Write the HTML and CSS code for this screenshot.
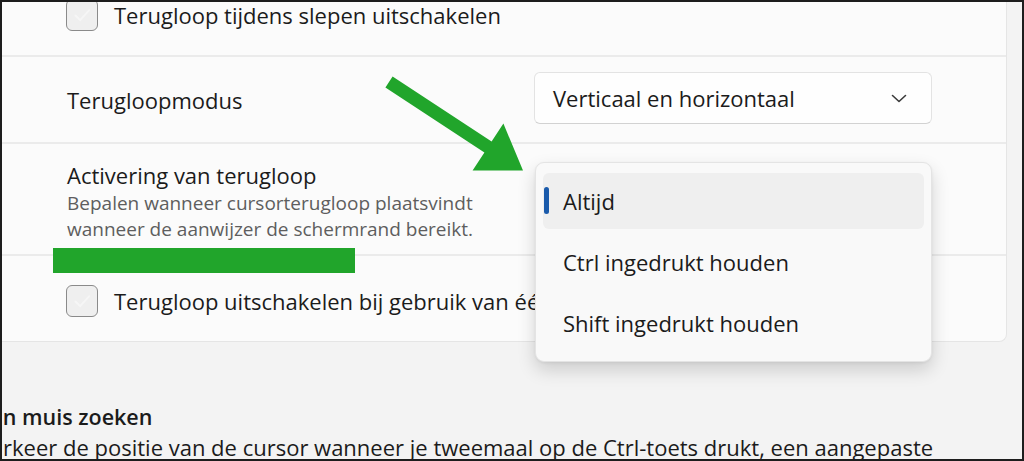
FILE: index.html
```html
<!DOCTYPE html>
<html lang="nl">
<head>
<meta charset="utf-8">
<title>Muisaanwijzer – terugloop</title>
<link rel="stylesheet" href="styles.css">
</head>
<body>
<div class="screen">
  <section class="card">
    <div class="row row-check">
      <span class="checkbox"><svg viewBox="0 0 32 32" width="32" height="32"><polyline points="9,16.5 14,21.5 23.5,11" fill="none" stroke="#f6f6f6" stroke-width="2" stroke-linecap="round" stroke-linejoin="round"/></svg></span>
      <span class="label">Terugloop tijdens slepen uitschakelen</span>
    </div>
    <div class="row row-select">
      <span class="label">Terugloopmodus</span>
      <div class="combo">
        <span class="combo-value">Verticaal en horizontaal</span>
        <svg class="chevron" viewBox="0 0 16 9" width="16" height="9"><polyline points="1.5,1.5 8,7.5 14.5,1.5" fill="none" stroke="#3a3a3a" stroke-width="1.6" stroke-linecap="round" stroke-linejoin="round"/></svg>
      </div>
    </div>
    <div class="row row-desc">
      <div class="text-block">
        <span class="label">Activering van terugloop</span>
        <p class="desc">Bepalen wanneer cursorterugloop plaatsvindt<br>wanneer de aanwijzer de schermrand bereikt.</p>
      </div>
    </div>
    <div class="row row-check">
      <span class="checkbox"><svg viewBox="0 0 32 32" width="32" height="32"><polyline points="9,16.5 14,21.5 23.5,11" fill="none" stroke="#f6f6f6" stroke-width="2" stroke-linecap="round" stroke-linejoin="round"/></svg></span>
      <span class="label">Terugloop uitschakelen bij gebruik van één scherm</span>
    </div>
  </section>

  <section class="next-section">
    <h2 class="section-title">Mijn muis zoeken</h2>
    <p class="section-desc">Markeer de positie van de cursor wanneer je tweemaal op de Ctrl-toets drukt, een aangepaste sneltoets gebruikt of de muis schudt</p>
  </section>

  <!-- open list of the activation combo box -->
  <ul class="flyout">
    <li class="option selected">Altijd</li>
    <li class="option">Ctrl ingedrukt houden</li>
    <li class="option">Shift ingedrukt houden</li>
  </ul>

  <!-- green markers -->
  <svg class="marker-arrow" viewBox="0 0 1024 461" width="1024" height="461">
    <polygon points="392.6,76.6 491.6,141.6 503.4,123.6 523,170.5 472.6,170.4 484.4,152.4 385.4,87.4" fill="#21a52b"/>
  </svg>
  <div class="marker-bar"></div>
</div>
</body>
</html>
```

FILE: styles.css
```css
html, body {
  margin: 0;
  padding: 0;
  background: #f3f3f3;
}

.screen {
  position: relative;
  width: 1024px;
  height: 461px;
  box-sizing: border-box;
  border: 2px solid #1d1d1d;
  overflow: hidden;
  background: #f3f3f3;
  font-family: "Open Sans", "Noto Sans", sans-serif;
  color: #1b1b1b;
}

/* settings card */
.card {
  margin: -32px 15px 0 -20px;
  background: #fbfbfb;
  border: 1px solid #e5e5e5;
  border-top: none;
  border-radius: 0 0 8px 8px;
}

.row {
  display: flex;
  align-items: center;
  padding: 0 74px 0 84px;
  border-top: 2px solid #ebebeb;
}

.row:first-child {
  border-top: none;
}

.row-check {
  height: 80px;
  padding-top: 5px;
  gap: 16px;
}

.row-select {
  height: 85px;
  justify-content: space-between;
}

.row-desc {
  height: 110px;
  align-items: flex-start;
}

.label {
  font-size: 22px;
  line-height: 30px;
  white-space: nowrap;
}

.checkbox {
  flex: none;
  width: 32px;
  height: 32px;
  box-sizing: border-box;
  border: 1.5px solid #8a8a8a;
  border-radius: 6px;
  background: #efefef;
  display: flex;
  align-items: center;
  justify-content: center;
  margin-left: -1px;
}

.checkbox svg {
  display: block;
}

.text-block {
  padding-top: 16px;
}

.text-block .label {
  display: block;
}

.desc {
  margin: 0;
  font-size: 19px;
  line-height: 26px;
  color: #5e5e5e;
}

/* combo box */
.combo {
  width: 398px;
  height: 52px;
  box-sizing: border-box;
  margin-top: -3px;
  display: flex;
  align-items: center;
  justify-content: space-between;
  padding: 0 24px 0 18px;
  background: #fefefe;
  border: 1px solid #e3e3e3;
  border-bottom-color: #d2d2d2;
  border-radius: 6px;
}

.combo-value {
  font-size: 22px;
  line-height: 30px;
}

.chevron {
  display: block;
}

/* section below the card */
.next-section {
  width: 980px;
  margin: 60px 0 0 -31px;
}

.section-title {
  margin: 0;
  font-size: 21.5px;
  font-weight: 600;
  line-height: 30px;
  white-space: nowrap;
}

.section-desc {
  margin: 0;
  font-size: 22px;
  line-height: 30px;
  color: #1b1b1b;
}

/* flyout list */
.flyout {
  position: absolute;
  left: 533px;
  top: 160px;
  width: 397px;
  height: 200px;
  box-sizing: border-box;
  margin: 0;
  padding: 10px 7px;
  list-style: none;
  background: #f9f9f9;
  border: 1px solid #e4e4e4;
  border-radius: 9px;
  box-shadow: 0 8px 18px rgba(0, 0, 0, 0.16), 0 1px 3px rgba(0, 0, 0, 0.06);
  display: flex;
  flex-direction: column;
  gap: 5px;
}

.option {
  position: relative;
  height: 56px;
  display: flex;
  align-items: center;
  padding-left: 20px;
  font-size: 22px;
  border-radius: 6px;
}

.option.selected {
  background: #efefef;
}

.option.selected::before {
  content: "";
  position: absolute;
  left: 1px;
  top: 14px;
  width: 5px;
  height: 27px;
  border-radius: 3px;
  background: #1b5bab;
}

/* annotations */
.marker-arrow {
  position: absolute;
  left: -2px;
  top: -2px;
  display: block;
}

.marker-bar {
  position: absolute;
  left: 51px;
  top: 246px;
  width: 302px;
  height: 25px;
  background: #21a52b;
}
```
